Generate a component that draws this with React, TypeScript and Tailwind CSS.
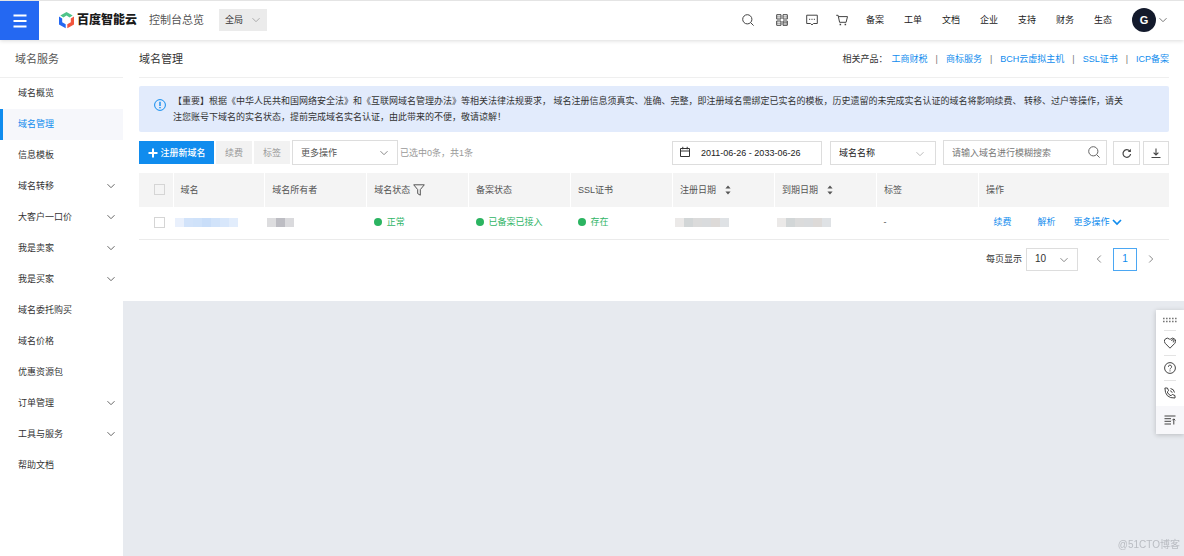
import type { ReactNode } from "react";
import { twMerge } from "tailwind-merge";

interface IconProps {
	className?: string;
}

interface MenuItem {
	label: string;
	active?: boolean;
	expandable?: boolean;
}

const topLinks = ["备案", "工单", "文档", "企业", "支持", "财务", "生态"];

const menu: MenuItem[] = [
	{ label: "域名概览" },
	{ label: "域名管理", active: true },
	{ label: "信息模板" },
	{ label: "域名转移", expandable: true },
	{ label: "大客户一口价", expandable: true },
	{ label: "我是卖家", expandable: true },
	{ label: "我是买家", expandable: true },
	{ label: "域名委托购买" },
	{ label: "域名价格" },
	{ label: "优惠资源包" },
	{ label: "订单管理", expandable: true },
	{ label: "工具与服务", expandable: true },
	{ label: "帮助文档" },
];

const related = ["工商财税", "商标服务", "BCH云虚拟主机", "SSL证书", "ICP备案"];

function Icon({
	children,
	className,
	viewBox = "0 0 12 12",
}: IconProps & { children: ReactNode; viewBox?: string }) {
	return (
		<svg
			viewBox={viewBox}
			className={twMerge("h-3 w-3 shrink-0", className)}
			fill="none"
			stroke="currentColor"
			aria-hidden="true"
		>
			{children}
		</svg>
	);
}

function Chevron({ className }: IconProps) {
	return (
		<Icon viewBox="0 0 8 8" className={twMerge("h-2 w-2", className)}>
			<path d="M.5 2.2 4 5.7l3.5-3.5" />
		</Icon>
	);
}

function SearchIcon({ className }: IconProps) {
	return (
		<Icon className={className}>
			<circle cx="5.3" cy="5.3" r="4.6" />
			<path d="m8.700 8.700 2.900 2.900" />
		</Icon>
	);
}

function Logo() {
	return (
		<svg viewBox="0 0 15 17" className="h-[17px] w-[15px]" aria-hidden="true">
			<path d="M7.500 0 13.700 3.600 10.600 5.400 7.500 3.600 4.400 5.400 1.300 3.600Z" fill="#4fc48a" />
			<path d="M0 4.600 3.200 6.400V10.300L6.700 12.300V16.300L0 12.500Z" fill="#2468f2" />
			<path d="M15 4.600V12.500L8.300 16.300V12.300L11.800 10.300V6.400Z" fill="#f2553d" />
		</svg>
	);
}

function Header() {
	return (
		<header className="relative z-10 flex h-10 items-center border-t border-[#e4e4e4] bg-white pr-[17px] pb-px shadow-[0_1px_4px_rgba(0,0,0,0.14)]">
			<button
				type="button"
				aria-label="菜单"
				className="-mb-px flex w-[39px] items-center justify-center self-stretch bg-[#2468f2] text-white"
			>
				<Icon viewBox="0 0 14 14" className="h-3.5 w-3.5">
					<path d="M.5 1.500h13M.5 7h13M.5 12.500h13" strokeWidth="1.800" />
				</Icon>
			</button>
			<a href="#home" className="ml-5 flex items-center gap-[3px]">
				<Logo />
				<span className="text-xs font-black text-[#1b1b1b]">百度智能云</span>
			</a>
			<a href="#overview" className="ml-3 text-[11px] text-[#555]">
				控制台总览
			</a>
			<div className="relative ml-[15px]">
				<select
					aria-label="区域"
					className="h-[22px] w-12 appearance-none bg-[#ebebeb] pl-1.5 text-[#333]"
				>
					<option>全局</option>
				</select>
				<Chevron className="pointer-events-none absolute top-[7px] right-[7px] text-[#aaa]" />
			</div>
			<div className="ml-auto flex items-center gap-[18px] text-[#444]">
				<button type="button" aria-label="搜索" className="mr-1">
					<SearchIcon />
				</button>
				<button type="button" aria-label="应用">
					<Icon>
						<path d="M.7.7h4.300V5H.7zM7 .7h4.300V5H7zM.7 7h4.300v4.300H.7zM7 7h4.300v4.300H7z" />
						<path d="M.7 2.900H5M7 2.900h4.300M.7 9.200H5M7 8.500h4.300M7 9.900h4.300" strokeWidth=".6" />
					</Icon>
				</button>
				<button type="button" aria-label="消息">
					<Icon>
						<path d="M.7 1.200h10.600v8.300H7.500L6 10.900 4.500 9.500H.7z" />
						<path d="M3 5.300h1.200M5.400 5.300h1.200M7.800 5.300H9" />
					</Icon>
				</button>
				<button type="button" aria-label="购物车">
					<Icon>
						<path d="M.2 1.300h1.900l1.500 7h6.500l1.400-5.700H2.500" />
						<path d="M3.600 10.500h1.500M8.600 10.500h1.500" strokeWidth="1.400" />
					</Icon>
				</button>
				<nav className="flex gap-5 text-[#222]">
					{topLinks.map((label) => (
						<a key={label} href="#nav">
							{label}
						</a>
					))}
				</nav>
			</div>
			<button type="button" aria-label="账号" className="ml-5 flex items-center gap-[3px]">
				<span className="flex h-6 w-6 items-center justify-center rounded-full bg-[#131a2c] text-[11px] font-bold text-white">
					G
				</span>
				<Chevron className="text-[#777]" />
			</button>
		</header>
	);
}

function Sidebar() {
	return (
		<aside className="w-[123px] shrink-0 bg-white">
			<h2 className="flex h-[38px] items-center border-b border-[#efefef] pl-[15px] text-[11px] text-[#555]">
				域名服务
			</h2>
			<nav>
				{menu.map(({ label, active, expandable }) => (
					<a
						key={label}
						href="#menu"
						className={twMerge(
							"flex h-[31px] items-center justify-between border-l-3 border-transparent pr-2 pb-px pl-[15px] text-[#333]",
							active && "border-[#108cee] bg-[#f6f7fb] text-[#108cee]",
						)}
					>
						{label}
						{expandable && <Chevron className="text-[#666]" />}
					</a>
				))}
			</nav>
		</aside>
	);
}

function Notice() {
	return (
		<div className="mt-2 flex rounded-xs bg-[#e2ebfc] py-[7px] pr-4 pl-[15px] leading-4 text-[#333]">
			<Icon className="mt-1.5 mr-[7px] text-[#108cee]">
				<circle cx="6" cy="6" r="5.4" />
				<path d="M6 2.700v4.200M6 8v1.300" strokeWidth="1.400" />
			</Icon>
			<p>
				【重要】根据《中华人民共和国网络安全法》和《互联网域名管理办法》等相关法律法规要求， 域名注册信息须真实、准确、完整，即注册域名需绑定已实名的模板，历史遗留的未完成实名认证的域名将影响续费、 转移、过户等操作，请关
				<br />
				注您账号下域名的实名状态，提前完成域名实名认证，由此带来的不便，敬请谅解！
			</p>
		</div>
	);
}

function Toolbar() {
	return (
		<div className="mt-2 flex items-center">
			<div className="flex items-center gap-0.5">
				<button
					type="button"
					className="flex h-[23px] w-[75px] items-center justify-center gap-px bg-[#108cee] font-medium text-white"
				>
					<Icon>
						<path d="M6 1.500v9M1.500 6h9" strokeWidth="2" />
					</Icon>
					注册新域名
				</button>
				<button type="button" disabled className="h-[23px] w-9 bg-[#f2f2f2] text-[#999]">
					续费
				</button>
				<button type="button" disabled className="h-[23px] w-9 bg-[#f2f2f2] text-[#999]">
					标签
				</button>
				<div className="relative">
					<select
						aria-label="批量操作"
						className="h-[25px] w-[106px] appearance-none border border-[#ddd] bg-white pl-2 text-[#555]"
					>
						<option>更多操作</option>
					</select>
					<Chevron className="pointer-events-none absolute top-[9px] right-2.5 text-[#888]" />
				</div>
				<span className="text-[#999]">已选中0条，共1条</span>
			</div>
			<div className="ml-auto flex items-center">
				<div className="relative">
					<Icon className="pointer-events-none absolute top-[5px] left-[7px] text-[#333]">
						<path d="M1.500 2.500h9v8h-9zM1.500 5h9M3.800.8v2.500M8.200.8v2.500" />
					</Icon>
					<input
						aria-label="日期范围"
						defaultValue="2011-06-26 - 2033-06-26"
						className="h-6 w-[150px] border border-[#ddd] pl-7 text-[#222]"
					/>
				</div>
				<div className="relative ml-2">
					<select
						aria-label="搜索字段"
						className="h-6 w-[106px] appearance-none border border-[#ddd] bg-white pl-2 text-[#222]"
					>
						<option>域名名称</option>
					</select>
					<Chevron className="pointer-events-none absolute top-[9px] right-3 text-[#bbb]" />
				</div>
				<div className="relative ml-[7px]">
					<input
						aria-label="搜索域名"
						placeholder="请输入域名进行模糊搜索"
						className="h-[25px] w-[164px] border border-[#ddd] pl-2 placeholder:text-[#777]"
					/>
					<SearchIcon className="pointer-events-none absolute top-1.5 right-[7px] text-[#666]" />
				</div>
				<button
					type="button"
					aria-label="刷新"
					className="ml-1.5 flex h-6 w-[27px] items-center justify-center border border-[#ddd] text-[#444]"
				>
					<Icon>
						<path d="M9.600 7A3.800 3.800 0 1 1 8.700 4" strokeWidth="1.200" />
						<path d="M9.900 1.800v3.100H6.800z" fill="currentColor" stroke="none" />
					</Icon>
				</button>
				<button
					type="button"
					aria-label="下载"
					className="ml-[3px] flex h-6 w-[26px] items-center justify-center border border-[#ddd] text-[#444]"
				>
					<Icon>
						<path d="M6 1.500V8M3.600 5.600 6 8l2.400-2.400M1.500 10.500h9" strokeWidth="1.100" />
					</Icon>
				</button>
			</div>
		</div>
	);
}

function SortIcon() {
	return (
		<Icon viewBox="0 0 8 12" className="w-2 text-[#555]">
			<path d="M4 1.500 6.600 4.500H1.400ZM4 10.500 1.400 7.500h5.200Z" fill="currentColor" stroke="none" />
		</Icon>
	);
}

function Status({ children }: { children: ReactNode }) {
	return (
		<span className="flex items-center gap-[5px] text-[#30b566]">
			<span className="h-2 w-2 rounded-full bg-[#2bb461]" />
			{children}
		</span>
	);
}

// Pixelated stand-in for private values
function Mosaic({ colors }: { colors: string[] }) {
	return (
		<span className="-ml-[5px] flex h-[9px]">
			{colors.map((color, i) => (
				<span key={`${color}-${i}`} className="w-[9px]" style={{ backgroundColor: color }} />
			))}
		</span>
	);
}

const dateColors = ["#ebe9e8", "#d2d6d7", "#dbdbdb", "#d9dbdd", "#dddad8", "#dfe2e5"];

function DomainTable() {
	return (
		<table className="mt-2 w-full table-fixed text-left text-[#555]">
			<colgroup>
				<col className="w-[34px]" />
				<col className="w-[8.9%]" />
				<col className="w-[9.9%]" />
				<col className="w-[9.9%]" />
				<col className="w-[9.9%]" />
				<col className="w-[9.9%]" />
				<col className="w-[9.9%]" />
				<col className="w-[9.9%]" />
				<col className="w-[9.9%]" />
				<col />
			</colgroup>
			<thead>
				<tr className="h-[34px] bg-[#f4f4f4] *:border-r *:border-white *:px-[7px] *:pb-px *:font-normal *:last:border-r-0">
					<th>
						<input
							type="checkbox"
							aria-label="全选"
							className="ml-2 block h-[11px] w-[11px] appearance-none border border-[#d5d5d5]"
						/>
					</th>
					<th>域名</th>
					<th>域名所有者</th>
					<th>
						<span className="flex items-center gap-[3px]">
							域名状态
							<Icon>
								<path d="M.7.8h10.600L7.300 5.600v5.600L4.700 9.600v-4z" />
							</Icon>
						</span>
					</th>
					<th>备案状态</th>
					<th>SSL证书</th>
					<th>
						<span className="flex items-center gap-2">
							注册日期
							<SortIcon />
						</span>
					</th>
					<th>
						<span className="flex items-center gap-2">
							到期日期
							<SortIcon />
						</span>
					</th>
					<th>标签</th>
					<th>操作</th>
				</tr>
			</thead>
			<tbody>
				<tr className="h-8 border-b border-[#ebebeb] *:px-[7px] *:pb-px">
					<td>
						<input
							type="checkbox"
							aria-label="选择域名"
							className="ml-2 block h-[11px] w-[11px] appearance-none border border-[#d5d5d5]"
						/>
					</td>
					<td>
						<Mosaic
							colors={["#e9f0fc", "#d2e3fa", "#cfe2fa", "#c9def9", "#d1e3fa", "#d8e7fb", "#e2edfc"]}
						/>
					</td>
					<td>
						<Mosaic colors={["#dddddf", "#bdbdc3", "#dadadd"]} />
					</td>
					<td>
						<Status>正常</Status>
					</td>
					<td>
						<Status>已备案已接入</Status>
					</td>
					<td>
						<Status>存在</Status>
					</td>
					<td>
						<Mosaic colors={dateColors} />
					</td>
					<td>
						<Mosaic colors={dateColors} />
					</td>
					<td>-</td>
					<td>
						<span className="flex items-center pl-2 text-[#108cee]">
							<a href="#renew">续费</a>
							<a href="#dns" className="ml-[26px]">
								解析
							</a>
							<button type="button" className="ml-[18px] flex items-center gap-[3px]">
								更多操作
								<Icon viewBox="0 0 10 8" className="h-2 w-2.5">
									<path d="M1 2l4 4 4-4" strokeWidth="1.700" />
								</Icon>
							</button>
						</span>
					</td>
				</tr>
			</tbody>
		</table>
	);
}

function Pagination() {
	return (
		<div className="mt-2 flex items-center justify-end pr-3.5 text-[#333]">
			<label htmlFor="page-size">每页显示</label>
			<div className="relative ml-1">
				<select
					id="page-size"
					className="h-[23px] w-[52px] appearance-none border border-[#ddd] bg-white pl-2 text-[10px]"
				>
					<option>10</option>
				</select>
				<Chevron className="pointer-events-none absolute top-2 right-2.5 text-[#888]" />
			</div>
			<button type="button" aria-label="上一页" className="ml-[17px]">
				<Chevron className="rotate-90 text-[#888]" />
			</button>
			<button
				type="button"
				className="mx-2.5 h-[23px] w-6 border border-[#4ba7f3] text-[10px] text-[#108cee]"
			>
				1
			</button>
			<button type="button" aria-label="下一页">
				<Chevron className="-rotate-90 text-[#888]" />
			</button>
		</div>
	);
}

function FloatingTools() {
	return (
		<div className="fixed top-[310px] right-0 flex w-7 flex-col items-center bg-white text-[#444] shadow-[0_1px_5px_rgba(0,0,0,0.2)]">
			<Icon viewBox="0 0 14 6" className="mt-[7px] mb-[7px] h-1.5 w-3.5 text-[#777]">
				<path d="M0 1.500h14M0 4.500h14" strokeWidth="1.300" strokeDasharray="1.600 1.400" />
			</Icon>
			<button type="button" aria-label="收藏" className="border-t border-[#e4e4e4] py-[6px]">
				<Icon>
					<path d="M6 11.200 1.200 6.300a3 3 0 0 1 0-4.200 3 3 0 0 1 4.200 0L6 2.600l.6-.5a3 3 0 0 1 4.200 0 3 3 0 0 1 0 4.200zM7.600 3.900q0-1.300 1.300-1.300 1.300.1 1.200 1.300-.1 1.200-1.300 1.100" />
				</Icon>
			</button>
			<button type="button" aria-label="帮助" className="border-t border-[#e4e4e4] py-[6px]">
				<Icon>
					<circle cx="6" cy="6" r="5.4" />
					<path d="M4.400 4.800a1.600 1.600 0 1 1 2.300 1.400Q6 6.600 6 7.400M6 8.400v1" />
				</Icon>
			</button>
			<button type="button" aria-label="电话" className="border-t border-[#e4e4e4] pt-[6px] pb-[7px]">
				<Icon>
					<path d="M.9 1h2.500l1.200 2.700L3.200 5q1.200 2.700 3.800 3.800l1.300-1.400L11 8.600V11Q.9 11.500.9 1zM6.200 3.800q1.700.3 2 2M6.500 1.500Q10 2 10.500 5.500" />
				</Icon>
			</button>
			<button
				type="button"
				aria-label="收起"
				className="flex h-7 w-full items-center justify-center bg-[#f7f7fa]"
			>
				<Icon>
					<path d="M.5 2h11M.5 4.700H7M.5 7.300H7M.5 10H7M9.800 10.500V5M8.300 6.300 9.800 4.800l1.500 1.500" />
				</Icon>
			</button>
		</div>
	);
}

export default function App() {
	return (
		<div className="flex min-h-screen flex-col bg-[#e7eaef] font-['Liberation_Sans','Noto_Sans_CJK_SC',sans-serif] text-[9px] leading-4">
			<Header />
			<div className="flex flex-1">
				<Sidebar />
				<main className="min-w-0 flex-1">
					<section className="bg-white pr-[15px] pb-[30px] pl-4">
						<div className="flex h-[38px] items-center justify-between border-b border-[#efefef]">
							<h1 className="text-[11px] text-[#333]">域名管理</h1>
							<div className="flex items-center text-[#333]">
								<span className="mr-1">相关产品：</span>
								{related.map((label, i) => (
									<span key={label}>
										{i > 0 && <span className="mx-2 text-[#777]">|</span>}
										<a href="#related" className="text-[#108cee]">
											{label}
										</a>
									</span>
								))}
							</div>
						</div>
						<Notice />
						<Toolbar />
						<DomainTable />
						<Pagination />
					</section>
				</main>
			</div>
			<FloatingTools />
			<span className="fixed right-1 bottom-[3px] text-[10px] text-[#b9bcc2]">@51CTO博客</span>
		</div>
	);
}
